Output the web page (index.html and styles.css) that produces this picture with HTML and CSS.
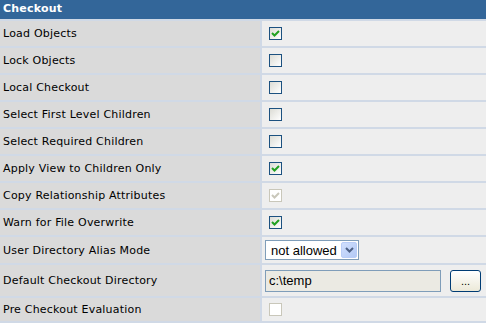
FILE: index.html
```html
<!DOCTYPE html>
<html lang="en">
<head>
  <meta charset="UTF-8">
  <title>Checkout</title>
  <link rel="stylesheet" href="styles.css">
</head>
<body>
  <div class="panel">
    <div class="panel-title">Checkout</div>

    <div class="row">
      <div class="label">Load Objects</div>
      <div class="value"><span class="check checked"><svg viewBox="0 0 11 11"><polyline points="2,5 4.5,7.5 9,3"/></svg></span></div>
    </div>
    <div class="row">
      <div class="label">Lock Objects</div>
      <div class="value"><span class="check"></span></div>
    </div>
    <div class="row">
      <div class="label">Local Checkout</div>
      <div class="value"><span class="check"></span></div>
    </div>
    <div class="row">
      <div class="label">Select First Level Children</div>
      <div class="value"><span class="check"></span></div>
    </div>
    <div class="row">
      <div class="label">Select Required Children</div>
      <div class="value"><span class="check"></span></div>
    </div>
    <div class="row">
      <div class="label">Apply View to Children Only</div>
      <div class="value"><span class="check checked"><svg viewBox="0 0 11 11"><polyline points="2,5 4.5,7.5 9,3"/></svg></span></div>
    </div>
    <div class="row">
      <div class="label">Copy Relationship Attributes</div>
      <div class="value"><span class="check checked disabled"><svg viewBox="0 0 11 11"><polyline points="2,5 4.5,7.5 9,3"/></svg></span></div>
    </div>
    <div class="row">
      <div class="label">Warn for File Overwrite</div>
      <div class="value"><span class="check checked"><svg viewBox="0 0 11 11"><polyline points="2,5 4.5,7.5 9,3"/></svg></span></div>
    </div>
    <div class="row row-select">
      <div class="label">User Directory Alias Mode</div>
      <div class="value">
        <div class="select">
          <span class="select-text">not allowed</span>
          <span class="select-arrow"><svg viewBox="0 0 9 6"><polyline points="1,1 4.5,4.5 8,1"/></svg></span>
        </div>
      </div>
    </div>
    <div class="row row-dir">
      <div class="label">Default Checkout Directory</div>
      <div class="value">
        <div class="textbox">c:\temp</div>
        <button class="browse">...</button>
      </div>
    </div>
    <div class="row row-last">
      <div class="label">Pre Checkout Evaluation</div>
      <div class="value"><span class="check disabled"></span></div>
    </div>
  </div>
</body>
</html>
```

FILE: styles.css
```css
body {
  margin: 0;
  font-family: 'DejaVu Sans', Verdana, sans-serif;
  font-size: 11px;
  background: #d0d9e6;
}

.panel {
  display: flex;
  flex-direction: column;
  gap: 2px;
  background: #d0d9e6;
  height: 323px;
}

.panel-title {
  height: 19px;
  line-height: 18px;
  padding-left: 3px;
  background: #336699;
  color: #ffffff;
  font-weight: bold;
  letter-spacing: 0.2px;
}

.row {
  display: grid;
  grid-template-columns: 260px 1fr;
  column-gap: 2px;
  height: 25px;
}

.row-select {
  height: 26px;
}

.row-dir {
  height: 31px;
}

.row-last {
  height: 23px;
}

.label {
  background: #dadada;
  color: #000000;
  padding-left: 3px;
  display: flex;
  align-items: center;
  letter-spacing: 0.2px;
}

.value {
  background: #eeeeee;
  display: flex;
  align-items: center;
  padding-left: 7px;
}

.check {
  box-sizing: border-box;
  width: 13px;
  height: 13px;
  border: 1px solid #1c5180;
  background: linear-gradient(135deg, #dcdcd5, #ffffff);
  display: flex;
  align-items: center;
  justify-content: center;
}

.check svg {
  width: 11px;
  height: 11px;
}

.check polyline {
  fill: none;
  stroke: #21a121;
  stroke-width: 2;
}

.check.disabled {
  border-color: #c9c7ba;
  background: #ffffff;
}

.check.disabled polyline {
  stroke: #c9c7ba;
}

.row-select .value,
.row-dir .value {
  padding-left: 3px;
}

.select {
  box-sizing: border-box;
  width: 94px;
  height: 20px;
  border: 1px solid #7f9db9;
  background: #ffffff;
  display: flex;
  align-items: center;
  justify-content: space-between;
  font-family: 'Liberation Sans', Arial, sans-serif;
  font-size: 13px;
  padding: 1px 1px 1px 5px;
}

.select-arrow {
  box-sizing: border-box;
  width: 16px;
  height: 16px;
  border: 1px solid #b9cdf7;
  border-radius: 2px;
  background: linear-gradient(135deg, #d0dffd, #b3c9f5);
  display: flex;
  align-items: center;
  justify-content: center;
}

.select-arrow svg {
  width: 9px;
  height: 6px;
}

.select-arrow polyline {
  fill: none;
  stroke: #4d6185;
  stroke-width: 2;
}

.textbox {
  box-sizing: border-box;
  width: 176px;
  height: 22px;
  border: 1px solid #7f9db9;
  background: #ebeae3;
  font-family: 'Liberation Sans', Arial, sans-serif;
  font-size: 13px;
  line-height: 20px;
  padding-left: 3px;
}

.browse {
  box-sizing: border-box;
  width: 31px;
  height: 22px;
  margin-left: 9px;
  border: 1px solid #003c74;
  border-radius: 3px;
  background: linear-gradient(#ffffff, #ece9d8);
  font-family: 'Liberation Sans', Arial, sans-serif;
  font-size: 11px;
  padding: 0;
  color: #000000;
}
```
